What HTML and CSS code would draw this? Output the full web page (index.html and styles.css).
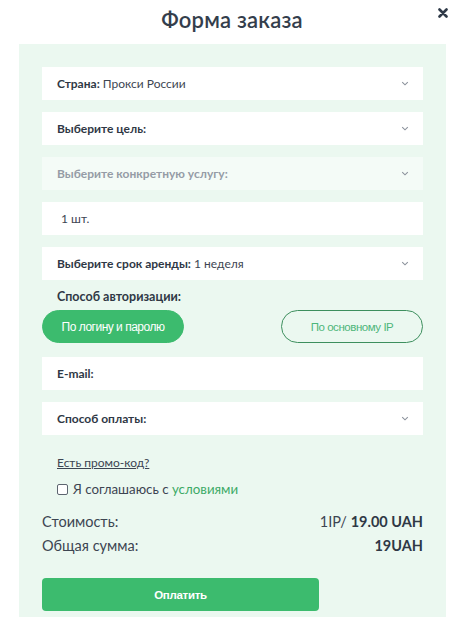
FILE: index.html
```html
<!DOCTYPE html>
<html lang="ru">
<head>
<meta charset="utf-8">
<title>Форма заказа</title>
<link rel="stylesheet" href="styles.css">
</head>
<body>
<div class="modal">
  <header class="modal-head">
    <h1 class="modal-title">Форма заказа</h1>
    <button class="close" type="button" aria-label="Закрыть">
      <svg width="10" height="10" viewBox="0 0 10 10"><path d="M1.5 1.5L8.5 8.5M8.5 1.5L1.5 8.5" stroke="#2f3a48" stroke-width="2.6" stroke-linecap="round"/></svg>
    </button>
  </header>

  <form class="panel">
    <div class="field select">
      <span><b>Страна:</b> Прокси России</span>
      <svg class="chev" width="8" height="5" viewBox="0 0 8 5"><path d="M1.2 1.2l2.8 2.6 2.8-2.6" fill="none" stroke="#8a919b" stroke-width="1.1"/></svg>
    </div>
    <div class="field select">
      <span><b>Выберите цель:</b></span>
      <svg class="chev" width="8" height="5" viewBox="0 0 8 5"><path d="M1.2 1.2l2.8 2.6 2.8-2.6" fill="none" stroke="#8a919b" stroke-width="1.1"/></svg>
    </div>
    <div class="field select disabled">
      <span><b>Выберите конкретную услугу:</b></span>
      <svg class="chev" width="8" height="5" viewBox="0 0 8 5"><path d="M1.2 1.2l2.8 2.6 2.8-2.6" fill="none" stroke="#8a919b" stroke-width="1.1"/></svg>
    </div>
    <div class="field qty">
      <span>1 шт.</span>
    </div>
    <div class="field select">
      <span><b>Выберите срок аренды:</b> 1 неделя</span>
      <svg class="chev" width="8" height="5" viewBox="0 0 8 5"><path d="M1.2 1.2l2.8 2.6 2.8-2.6" fill="none" stroke="#8a919b" stroke-width="1.1"/></svg>
    </div>

    <div class="auth">
      <div class="auth-label">Способ авторизации:</div>
      <div class="auth-opts">
        <button type="button" class="pill active">По логину и паролю</button>
        <button type="button" class="pill">По основному IP</button>
      </div>
    </div>

    <div class="field">
      <span><b>E-mail:</b></span>
    </div>
    <div class="field select">
      <span><b>Способ оплаты:</b></span>
      <svg class="chev" width="8" height="5" viewBox="0 0 8 5"><path d="M1.2 1.2l2.8 2.6 2.8-2.6" fill="none" stroke="#8a919b" stroke-width="1.1"/></svg>
    </div>

    <a class="promo" href="#">Есть промо-код?</a>
    <label class="agree"><span class="box"></span>Я соглашаюсь с <span class="terms">условиями</span></label>

    <div class="totals">
      <div class="row"><span>Стоимость:</span><span>1IP/ <b>19.00 UAH</b></span></div>
      <div class="row"><span>Общая сумма:</span><span><b>19UAH</b></span></div>
    </div>

    <button type="button" class="pay">Оплатить</button>
  </form>
</div>
</body>
</html>
```
FILE: styles.css
```css
* { box-sizing: border-box; }

html, body {
  margin: 0;
  background: #ffffff;
  font-family: Lato, "Open Sans", sans-serif;
  color: #343d4a;
}

.modal {
  width: 464px;
  height: 617px;
  overflow: hidden;
}

.modal-head {
  position: relative;
  height: 44px;
  display: flex;
  justify-content: center;
  align-items: flex-start;
  padding-top: 6px;
}

.modal-title {
  margin: 0;
  font-size: 22px;
  line-height: 28px;
  font-weight: 600;
  color: #343e4c;
  letter-spacing: 0.2px;
}

.close {
  position: absolute;
  top: 8px;
  right: 16px;
  border: 0;
  padding: 0;
  background: none;
  width: 10px;
  height: 10px;
  display: flex;
}

.panel {
  margin: 0 18px 0 19px;
  background: #ebf8f0;
  padding: 23px 23px 20px;
  display: flex;
  flex-direction: column;
  min-height: 573px;
}

.field {
  height: 33px;
  background: #ffffff;
  display: flex;
  align-items: center;
  justify-content: space-between;
  padding: 0 14px 0 15px;
  font-size: 12px;
  color: #3d4552;
  margin-bottom: 12px;
}

.field b { font-weight: 700; color: #2f3845; }

.field.disabled { background: #f4fbf7; }
.field.disabled b { color: #959ca6; }

.field.qty { padding-left: 19px; font-size: 12px; }

.chev { display: block; }

.auth { margin-top: -3px; margin-bottom: 14px; }

.auth-label {
  padding-left: 15px;
  font-size: 12.5px;
  line-height: 15px;
  font-weight: 700;
  color: #2f3845;
  margin-bottom: 6px;
}

.auth-opts {
  display: flex;
  justify-content: space-between;
}

.pill {
  width: 142px;
  height: 33px;
  border-radius: 17px;
  font-family: "Liberation Sans", Arial, sans-serif;
  font-size: 11.5px;
  letter-spacing: -0.45px;
  border: 1px solid #3d8f5e;
  background: transparent;
  color: #4db67a;
}

.pill.active {
  background: #3cbb6e;
  border-color: #3cbb6e;
  color: #ffffff;
  font-size: 12px;
  letter-spacing: -0.5px;
}

.promo {
  margin-top: 8px;
  padding-left: 15px;
  font-size: 12px;
  line-height: 15px;
  color: #3d4552;
  text-decoration: underline;
  align-self: flex-start;
}

.agree {
  display: flex;
  align-items: center;
  margin-top: 11px;
  padding-left: 15px;
  font-size: 13.3px;
  line-height: 17px;
  color: #3d4552;
  white-space: pre;
}

.box {
  width: 11px;
  height: 11px;
  border: 1px solid #5d6570;
  border-radius: 2px;
  background: #ffffff;
  margin-right: 5px;
}

.terms { color: #3caa66; }

.totals {
  margin-top: 15px;
  display: flex;
  flex-direction: column;
  gap: 6px;
}

.row {
  display: flex;
  justify-content: space-between;
  font-size: 14.5px;
  color: #3d4552;
  line-height: 18px;
}

.row b { font-weight: 700; color: #2f3845; }

.pay {
  margin-top: 23px;
  width: 277px;
  height: 33px;
  border: 0;
  border-radius: 4px;
  background: #3cbb6e;
  color: #ffffff;
  font-family: "Liberation Sans", Arial, sans-serif;
  font-weight: 700;
  font-size: 11.5px;
  letter-spacing: -0.3px;
}
```
